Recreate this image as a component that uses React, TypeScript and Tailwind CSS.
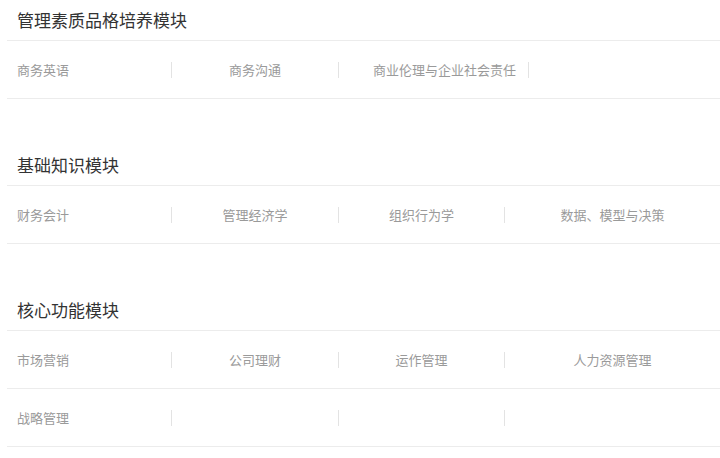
import React from "react";

type Row = { cells: string[]; widths?: string[] };

const font = { fontFamily: '"Microsoft YaHei", "Noto Sans CJK SC", "Noto Sans", sans-serif' };

function Divider() {
  return <div className="w-px h-[16px] bg-[#e3e3e3] shrink-0" />;
}

function StdRow({ cells, last4 }: { cells: string[]; last4: boolean }) {
  return (
    <div className="flex items-center h-[58px] border-b border-[#ececec] text-[13px] text-[#9a9a9a]">
      <div className="w-[164px] pl-[10px] shrink-0">{cells[0]}</div>
      <Divider />
      <div className="w-[166px] text-center shrink-0">{cells[1] ?? ""}</div>
      <Divider />
      <div className="w-[165px] text-center shrink-0">{cells[2] ?? ""}</div>
      <Divider />
      {last4 && <div className="flex-1 text-center">{cells[3] ?? ""}</div>}
    </div>
  );
}

function Title({ children }: { children: React.ReactNode }) {
  return (
    <div className="h-[41px] flex items-center pl-[10px] border-b border-[#ececec] text-[17px] text-[#333333]">
      {children}
    </div>
  );
}

export default function App() {
  return (
    <div className="w-[720px] h-[458px] bg-white overflow-hidden pl-[7px]" style={font}>
      <section>
        <Title>管理素质品格培养模块</Title>
        <div className="flex items-center h-[58px] border-b border-[#ececec] text-[13px] text-[#9a9a9a]">
          <div className="w-[164px] pl-[10px] shrink-0">商务英语</div>
          <Divider />
          <div className="w-[166px] text-center shrink-0">商务沟通</div>
          <Divider />
          <div className="w-[189px] pl-[34px] shrink-0">商业伦理与企业社会责任</div>
          <Divider />
        </div>
      </section>
      <section className="mt-[46px]">
        <Title>基础知识模块</Title>
        <StdRow cells={["财务会计", "管理经济学", "组织行为学", "数据、模型与决策"]} last4 />
      </section>
      <section className="mt-[46px]">
        <Title>核心功能模块</Title>
        <StdRow cells={["市场营销", "公司理财", "运作管理", "人力资源管理"]} last4 />
        <StdRow cells={["战略管理", "", ""]} last4={false} />
      </section>
    </div>
  );
}
